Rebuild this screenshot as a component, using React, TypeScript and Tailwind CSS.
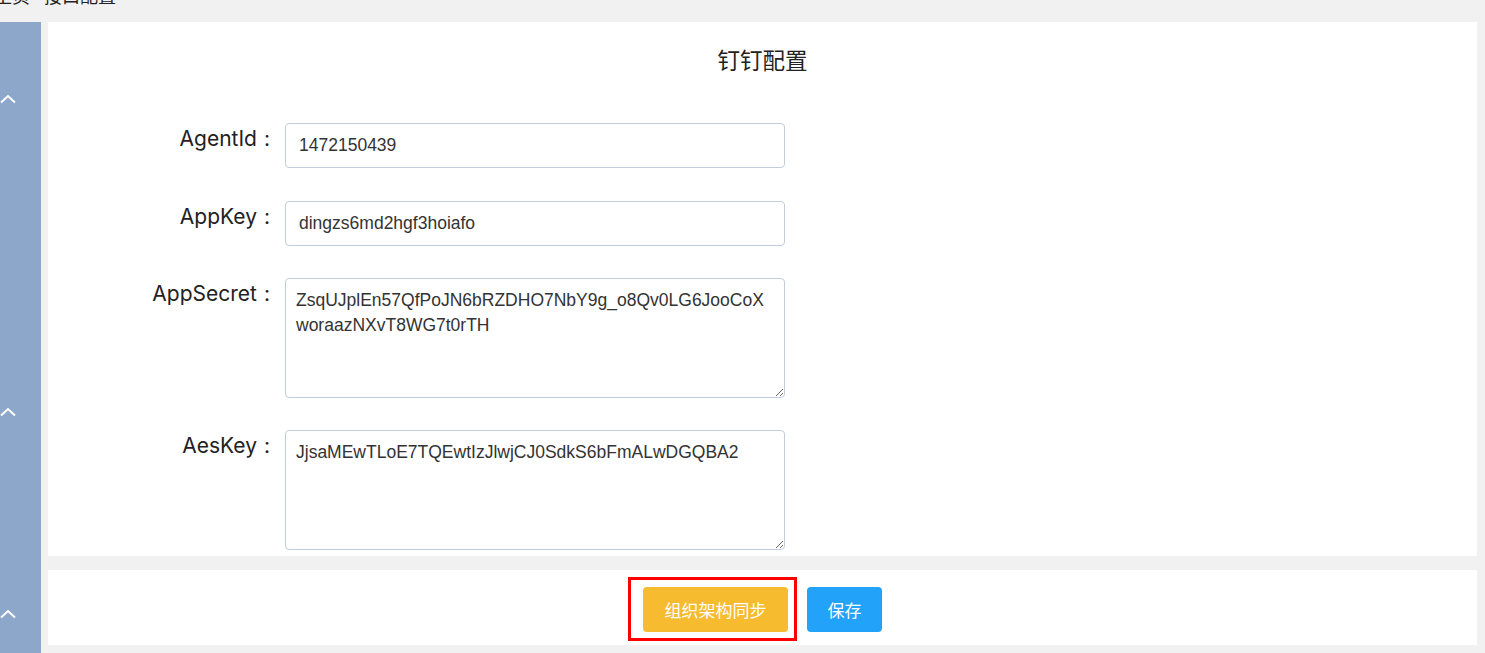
import React from 'react';

const fields = [
  { label: 'AgentId', value: '1472150439', multi: false },
  { label: 'AppKey', value: 'dingzs6md2hgf3hoiafo', multi: false },
  { label: 'AppSecret', value: 'ZsqUJplEn57QfPoJN6bRZDHO7NbY9g_o8Qv0LG6JooCoXworaazNXvT8WG7t0rTH', multi: true },
  { label: 'AesKey', value: 'JjsaMEwTLoE7TQEwtIzJlwjCJ0SdkS6bFmALwDGQBA2', multi: true },
];

const Chevron = () => (
  <svg width="18" height="10" viewBox="0 0 18 10" fill="none" className="block">
    <path d="M2 8.5 L9 2 L16 8.5" stroke="white" strokeWidth="2" />
  </svg>
);

export default function App() {
  return (
    <div className="w-[1485px] h-[653px] overflow-hidden bg-[#f1f1f1] font-['Liberation_Sans','Noto_Sans_CJK_SC',sans-serif]">
      {/* breadcrumb, scrolled mostly out of view */}
      <div className="h-[22px] overflow-hidden">
        <div className="-mt-[16px] -ml-[6px] text-[18px] leading-[22px] text-[#222] font-['Noto_Sans_CJK_SC',sans-serif]">
          主页&gt; 接口配置
        </div>
      </div>

      <div className="flex gap-[7px] pr-[8px]">
        <aside className="w-[41px] h-[631px] bg-[#8da7ca] flex flex-col pt-[72px]">
          <div className="-ml-[1px]"><Chevron /></div>
          <div className="-ml-[1px] mt-[303px]"><Chevron /></div>
          <div className="-ml-[1px] mt-[192px]"><Chevron /></div>
        </aside>

        <main className="flex-1 flex flex-col gap-[14px]">
          <section className="bg-white h-[534px] pt-[21px]">
            <h1 className="text-center text-[22.5px] leading-[32px] text-[#222] font-['Noto_Sans_CJK_SC',sans-serif]">钉钉配置</h1>
            <form className="mt-[48px] flex flex-col">
              {fields.map((f, i) => (
                <div key={f.label} className={`flex items-start ${i === 1 ? 'mt-[33px]' : i > 1 ? 'mt-[32px]' : ''}`}>
                  <label className="w-[237px] text-right pr-[15px] text-[21px] leading-[30px] text-[#222] font-['Inter',sans-serif] mt-[1px]">
                    {f.label}<span className="ml-[7px]">:</span>
                  </label>
                  {f.multi ? (
                    <textarea
                      readOnly
                      value={f.value}
                      className="w-[500px] h-[120px] border border-[#c3cdd9] rounded-[4px] px-[10px] py-[9px] text-[17.5px] leading-[25px] text-[#333] outline-none resize-y font-['Liberation_Sans',sans-serif]"
                    />
                  ) : (
                    <input
                      readOnly
                      value={f.value}
                      className="w-[500px] h-[45px] border border-[#c3cdd9] rounded-[4px] px-[13px] text-[17.5px] text-[#333] outline-none font-['Liberation_Sans',sans-serif]"
                    />
                  )}
                </div>
              ))}
            </form>
          </section>

          <section className="bg-white h-[75px] flex items-start justify-center gap-[19px] pt-[17px]">
            <div className="relative">
              <button className="w-[145px] h-[45px] rounded-[4px] bg-[#f7bb2f] text-white text-[17px] font-['Noto_Sans_CJK_SC',sans-serif]">
                组织架构同步
              </button>
              <div className="absolute -left-[15px] -right-[9px] -top-[10px] -bottom-[9px] border-[3px] border-[#f00] pointer-events-none" />
            </div>
            <button className="w-[75px] h-[45px] rounded-[4px] bg-[#22a2f8] text-white text-[17px] font-['Noto_Sans_CJK_SC',sans-serif]">
              保存
            </button>
          </section>
        </main>
      </div>
    </div>
  );
}
